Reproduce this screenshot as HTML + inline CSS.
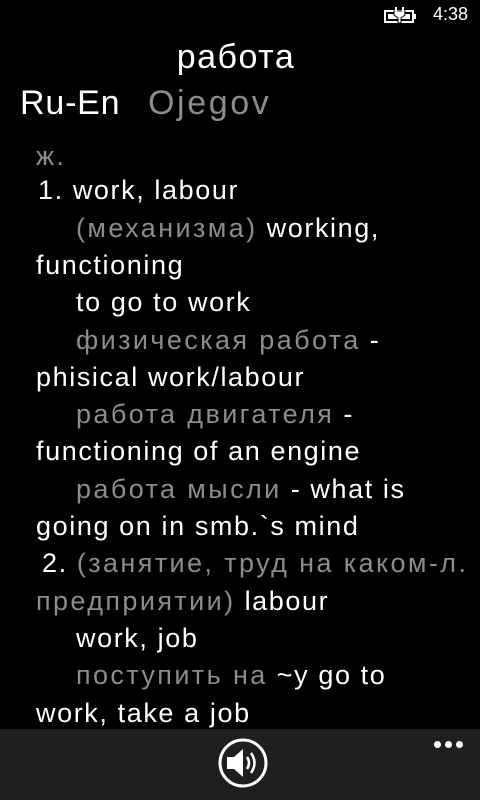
<!DOCTYPE html>
<html><head><meta charset="utf-8"><style>
html,body{margin:0;padding:0;background:#000;width:480px;height:800px;overflow:hidden;font-family:"Liberation Sans","DejaVu Sans",sans-serif;color:#fff}
.l{position:absolute;left:36px;font-size:27px;line-height:37px;white-space:nowrap;letter-spacing:1.6px}
.g{color:#8c8c8c;letter-spacing:2.4px}
.i{left:76px}
</style></head><body>
<div style="position:absolute;right:12px;top:4px;font-size:18px;color:#fff">4:38</div>
<svg style="position:absolute;left:384px;top:6px" width="36" height="18" viewBox="0 0 36 18"><rect x="1" y="5" width="28" height="11" fill="none" stroke="#fff" stroke-width="2"/><rect x="29" y="8" width="3" height="5" fill="#fff"/><rect x="4" y="8" width="22" height="5" fill="#fff"/><path d="M10 5h11v4l-4 3v5h-3v-5l-4-3z" stroke="#000" stroke-width="1" fill="#fff"/><path d="M12 1v5M19 1v5" stroke="#fff" stroke-width="2"/></svg>
<div style="position:absolute;left:0;width:472px;text-align:center;top:38px;font-size:34px;letter-spacing:1.5px">работа</div>
<div style="position:absolute;left:20px;top:84px;font-size:34px;letter-spacing:0.8px">Ru-En<span style="position:absolute;left:128px;color:#8c8c8c;letter-spacing:2.6px">Ojegov</span></div>
<div class="l g" style="top:138px">ж.</div>
<div class="l" style="top:172px;left:38px">1. work, labour</div>
<div class="l i" style="top:210px"><span class="g">(механизма)</span> working,</div>
<div class="l" style="top:247px">functioning</div>
<div class="l i" style="top:284px">to go to work</div>
<div class="l i" style="top:322px"><span class="g">физическая работа</span> -</div>
<div class="l" style="top:359px">phisical work/labour</div>
<div class="l i" style="top:396px"><span class="g">работа двигателя</span> -</div>
<div class="l" style="top:433px">functioning of an engine</div>
<div class="l i" style="top:471px"><span class="g">работа мысли</span> - what is</div>
<div class="l" style="top:508px">going on in smb.`s mind</div>
<div class="l" style="top:545px;left:42px">2. <span class="g">(занятие, труд на каком-л.</span></div>
<div class="l" style="top:583px"><span class="g">предприятии)</span> labour</div>
<div class="l i" style="top:620px">work, job</div>
<div class="l i" style="top:657px"><span class="g">поступить на</span> ~y go to</div>
<div class="l" style="top:695px">work, take a job</div>
<div style="position:absolute;left:0;top:729px;width:480px;height:71px;background:#1f1f1f"></div>
<svg style="position:absolute;left:217px;top:737px" width="52" height="52" viewBox="0 0 52 52"><circle cx="26" cy="26" r="23" fill="none" stroke="#fff" stroke-width="3"/><path d="M10 20h7l9-8v28l-9-8h-7z" fill="#fff"/><path d="M30 20q4 6 0 12M34 16q7 10 0 20" stroke="#fff" stroke-width="2.5" fill="none"/></svg>
<div style="position:absolute;left:434px;top:741px"><span style="position:absolute;left:0;width:7px;height:7px;border-radius:50%;background:#fff"></span><span style="position:absolute;left:11px;width:7px;height:7px;border-radius:50%;background:#fff"></span><span style="position:absolute;left:22px;width:7px;height:7px;border-radius:50%;background:#fff"></span></div>
</body></html>
